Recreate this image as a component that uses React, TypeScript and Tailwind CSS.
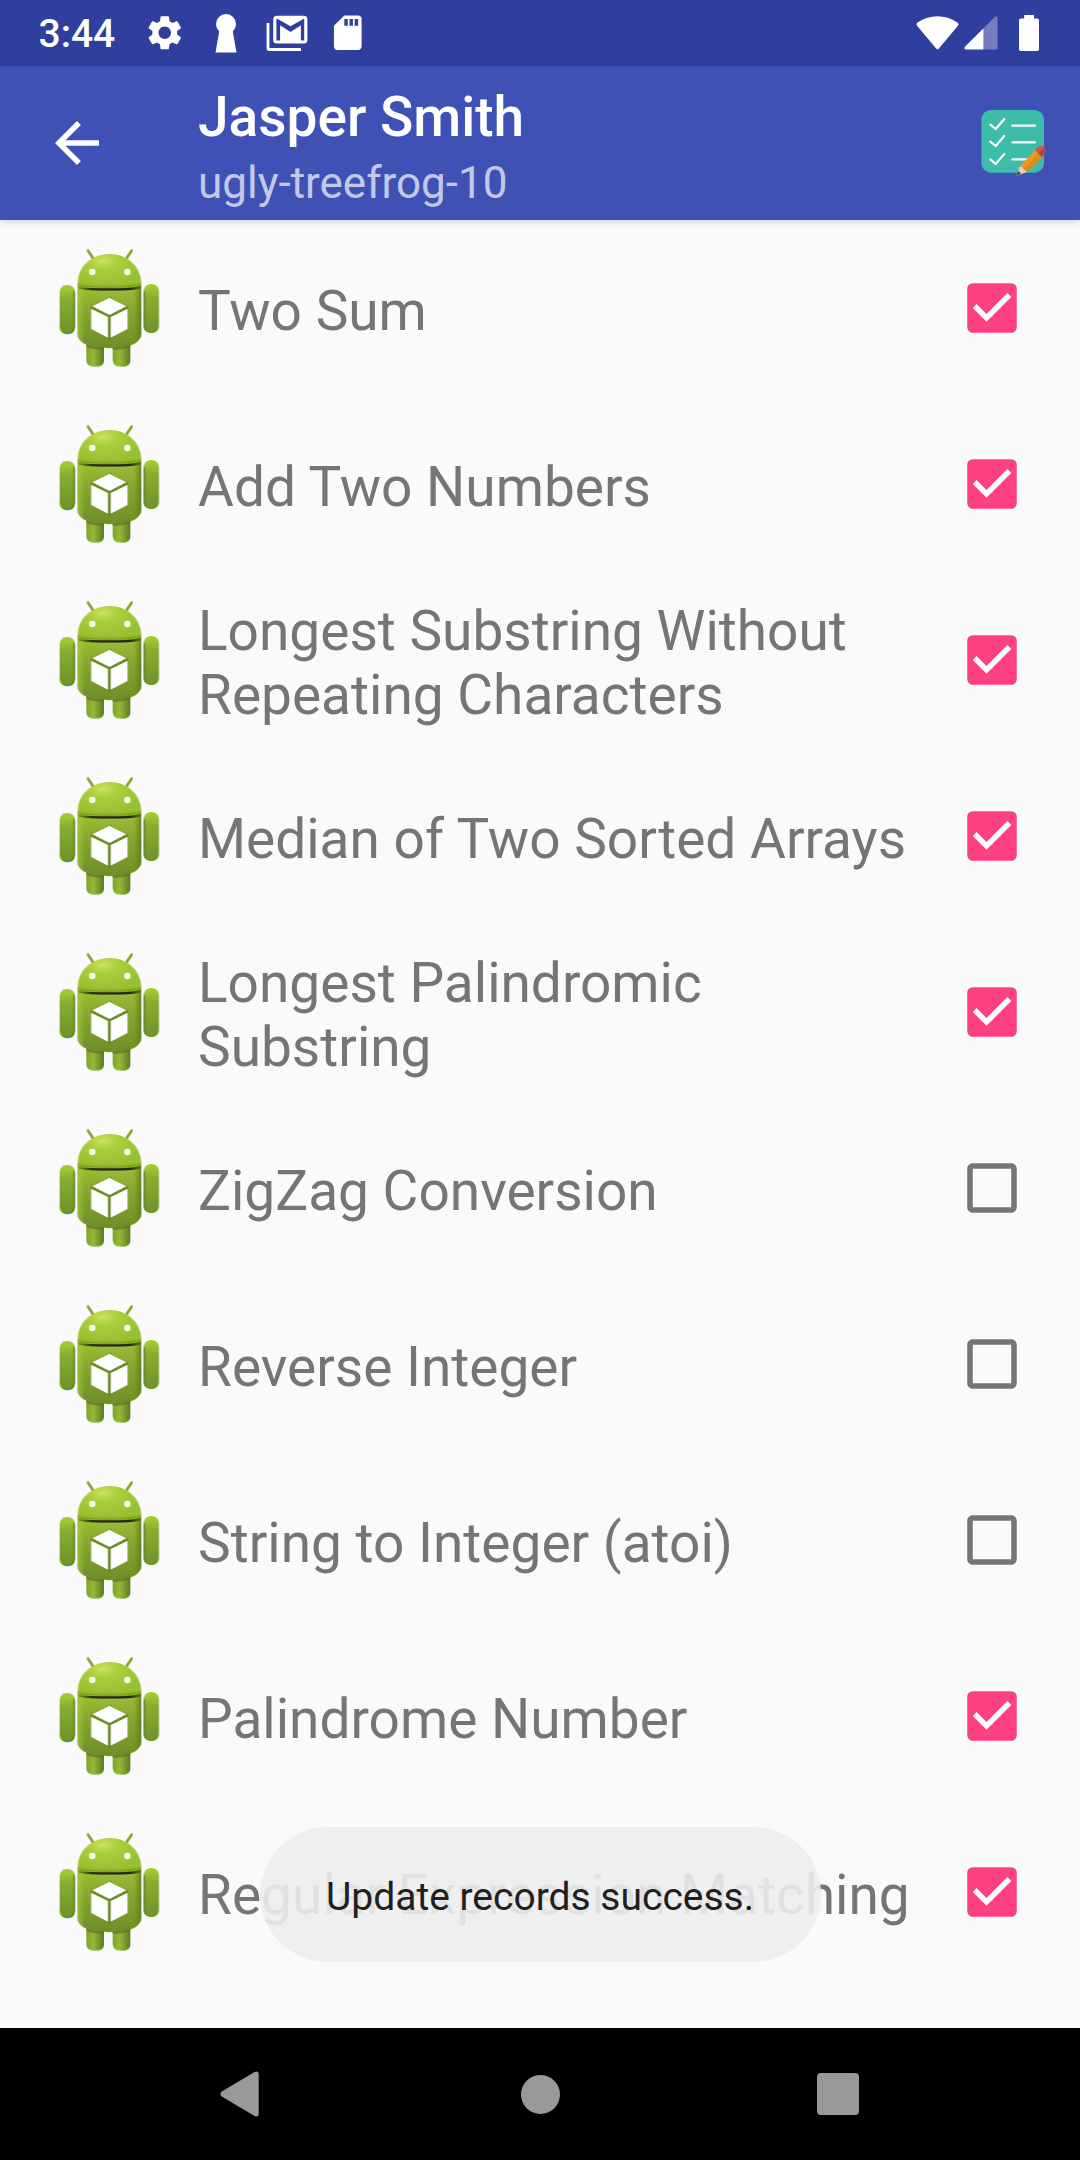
import React from "react";
import {
  MdArrowBack,
  MdCheckBox,
  MdCheckBoxOutlineBlank,
  MdSdCard,
  MdSettings,
} from "react-icons/md";

const problems = [
  { title: "Two Sum", done: true },
  { title: "Add Two Numbers", done: true },
  { title: "Longest Substring Without Repeating Characters", done: true },
  { title: "Median of Two Sorted Arrays", done: true },
  { title: "Longest Palindromic Substring", done: true },
  { title: "ZigZag Conversion", done: false },
  { title: "Reverse Integer", done: false },
  { title: "String to Integer (atoi)", done: false },
  { title: "Palindrome Number", done: true },
  { title: "Regular Expression Matching", done: true },
];

function Gradients() {
  return (
    <svg className="absolute h-0 w-0" aria-hidden="true">
      <defs>
        <linearGradient id="limb" x1="0" x2="1" y1="0" y2="0">
          <stop offset="0" stopColor="#7fa52b" />
          <stop offset="0.4" stopColor="#92b83a" />
          <stop offset="1" stopColor="#5d7c1f" />
        </linearGradient>
        <linearGradient id="arm" x1="0" x2="0" y1="0" y2="1">
          <stop offset="0" stopColor="#a8d035" />
          <stop offset="0.3" stopColor="#87ac31" />
          <stop offset="1" stopColor="#70932b" />
        </linearGradient>
        <radialGradient id="head" cx="0.4" cy="0.2" r="0.85">
          <stop offset="0" stopColor="#cfe55f" />
          <stop offset="0.3" stopColor="#a9cf3a" />
          <stop offset="1" stopColor="#92bb2e" />
        </radialGradient>
        <linearGradient id="torso" x1="0" x2="0" y1="0" y2="1">
          <stop offset="0" stopColor="#98bd31" />
          <stop offset="0.5" stopColor="#7fa22b" />
          <stop offset="1" stopColor="#6e8f2b" />
        </linearGradient>
        <linearGradient id="torsoEdge" x1="0" x2="1" y1="0" y2="0">
          <stop offset="0" stopColor="#a9d040" stopOpacity="0.6" />
          <stop offset="0.12" stopColor="#a9d040" stopOpacity="0" />
          <stop offset="0.88" stopColor="#5f7f1c" stopOpacity="0" />
          <stop offset="1" stopColor="#56731a" stopOpacity="0.7" />
        </linearGradient>
        <linearGradient id="neck" x1="0" x2="1" y1="0" y2="0">
          <stop offset="0" stopColor="#7a9c2a" />
          <stop offset="0.25" stopColor="#1f2c07" />
          <stop offset="0.8" stopColor="#1f2c07" />
          <stop offset="1" stopColor="#56731a" />
        </linearGradient>
        <filter id="soften" x="-10%" y="-10%" width="120%" height="120%">
          <feGaussianBlur stdDeviation="1.5" />
        </filter>
      </defs>
    </svg>
  );
}

function Robot() {
  return (
    <svg viewBox="0 -6 420 480" className="ml-10 h-[160px] w-[140px] shrink-0">
      <g filter="url(#soften)">
        <path d="M144 62l15 22M275 62l-15 22" stroke="#88a940" strokeWidth="9" strokeLinecap="round" />
        <path d="M139 335h53v57q0 18-26 18t-27-18z" fill="url(#limb)" />
        <path d="M218 335h53v57q0 18-26 18t-27-18z" fill="url(#limb)" />
        <path d="M139 345h53v14q-27 2-53-8zM218 345h53v6q-26 10-53 8z" fill="#587116" opacity="0.7" />
        <rect x="59" y="165" width="46" height="148" rx="21" fill="url(#arm)" />
        <path d="M100 180v112q-2 14-18 18 23 1 23-20V186z" fill="#5c7520" opacity="0.7" />
        <rect x="311" y="162" width="46" height="147" rx="21" fill="url(#arm)" />
        <path d="M316 180v110q0 12 16 17-21 0-21-20V186z" fill="#57721c" opacity="0.7" />
        <path d="M113 168q95 10 191-2l-1 16H114z" fill="url(#neck)" />
        <path d="M112 176q40 7 96 7t96-7v134q0 24-29 35-67 20-134 0-29-11-29-35z" fill="url(#torso)" />
        <path d="M112 176q40 7 96 7t96-7v134q0 24-29 35-67 20-134 0-29-11-29-35z" fill="url(#torsoEdge)" />
        <path d="M113 170q-3-48 31-76 29-22 64-22 38 0 64 22 34 28 32 73-30 8-96 8-62 0-95-5z" fill="url(#head)" />
        <path d="M114 163q90 11 190-2v5q-30 8-96 8-62 0-94-5z" fill="#6d9219" opacity="0.5" />
        <circle cx="157" cy="126" r="9.500" fill="#fff" />
        <circle cx="262" cy="126" r="9.500" fill="#fff" />
        <path d="M151 231l57-30 57 30v66l-57 31-57-31z" fill="#55701c" opacity="0.55" />
        <path d="M157 229l51-26 51 26-51 26z" fill="#fff" />
        <path d="M153 236l51 25v62l-51-26z" fill="#fff" />
        <path d="M263 236l-51 25v62l51-26z" fill="#fff" />
      </g>
    </svg>
  );
}

function Keyhole() {
  return (
    <svg viewBox="0 0 22 40" className="h-10 w-[22px]" fill="#fff">
      <circle cx="11" cy="11" r="10" />
      <path d="M4.500 17h13l4 22.500H.5z" />
    </svg>
  );
}

function MailStack() {
  return (
    <svg viewBox="0 0 42 36" className="h-9 w-[42px]" fill="none">
      <path d="M2 8v25.300q0 1.200 1.200 1.200H35" stroke="#fff" strokeWidth="2.800" />
      <rect x="8.800" y="2.400" width="31" height="24.600" rx="2" stroke="#fff" strokeWidth="3.200" />
      <path d="M14 26.500V10.300l10.500 6.600L35 10.300v16.200z" fill="#fff" />
      <path d="M12.700 25V5.500l11.800 7.800 11.800-7.800V25" stroke="#303f9f" strokeWidth="2.800" />
      <path d="M9 2.400h31L24.500 11.300z" fill="#fff" />
    </svg>
  );
}

function Wifi() {
  return (
    <svg viewBox="0 0 43 34" className="h-[34px] w-[43px]" fill="#fff">
      <path d="M1.100 9.800Q-.4 8 1.600 6.600 11 .3 21.500.3T41.400 6.600Q43.400 8 41.900 9.800L22.900 32.600Q21.500 34.200 20.100 32.600z" />
    </svg>
  );
}

function Signal() {
  return (
    <svg viewBox="0 0 34 34" className="ml-[5px] h-[34px] w-[34px]" fill="#fff">
      <path d="M30.800 1Q33.500-.8 33.500 2v30q0 1.500-1.500 1.500H19.500V12.200z" opacity="0.32" />
      <path d="M19.500 12.200v21.300H2Q-.7 33.500 1.200 30.500z" />
    </svg>
  );
}

function Battery() {
  return (
    <svg viewBox="0 0 20 36" className="ml-[21px] h-9 w-5" fill="#fff">
      <path d="M5.200 0h9.800v3.400h3.200q1.800 0 1.800 1.800v29q0 1.800-1.800 1.800H1.800Q0 36 0 34.200v-29q0-1.800 1.800-1.800h3.400z" />
    </svg>
  );
}

function Checklist() {
  return (
    <svg viewBox="288 315 228 228" className="mr-7 h-[76px] w-[76px] shrink-0" fill="none">
      <rect x="304" y="330" width="188" height="188" rx="29" fill="#3dbca9" />
      <g stroke="#fff" strokeWidth="6.500" strokeLinecap="round" strokeLinejoin="round">
        <path d="M331 374l16 13 26-30M331 425l16 13 26-30M331 478l16 14 26-30" />
        <path d="M397 377h68M397 427h68M397 478h45" />
      </g>
      <path d="M421 496l20 19-21 9-10 4q-2-2 1-8z" fill="#dfd0b8" />
      <path d="M415 512l9 9-12 6q-5 1-2-5z" fill="#50504c" />
      <path d="M421 497l44-46 21 20-45 45z" fill="#f0981f" />
      <path d="M432 506l45-46 10 11-46 45z" fill="#dc8a25" />
      <path d="M465 451l12-12q6-5 12 1l6 6q5 5 1 12l-10 13z" fill="#d4574c" />
      <path d="M475 461l15-17 5 3q5 5 1 11l-10 13z" fill="#a84a45" />
    </svg>
  );
}

export default function App() {
  return (
    <div className="relative flex h-[2160px] w-[1080px] flex-col overflow-hidden bg-[#fafafa] font-['Roboto',sans-serif]">
      <Gradients />
      <div className="flex h-[66px] shrink-0 items-center bg-[#303f9f] text-white">
        <span className="w-[134px] shrink-0 pt-0.5 pl-[38.500px] text-[39px] leading-[66px] font-medium">3:44</span>
        <div className="flex">
          <span className="flex w-[61px] items-center justify-center"><MdSettings className="h-[41.500px] w-[41.500px]" /></span>
          <span className="flex w-[61px] items-center justify-center"><Keyhole /></span>
          <span className="flex w-[61px] items-center justify-center"><MailStack /></span>
          <span className="flex w-[61px] items-center justify-center"><MdSdCard className="h-[41.500px] w-[41.500px]" /></span>
        </div>
        <div className="mr-[41px] ml-auto flex items-center">
          <Wifi />
          <Signal />
          <Battery />
        </div>
      </div>

      <header className="z-10 flex h-[154px] shrink-0 items-center bg-[#3f51b5] text-white shadow-[0_2px_9px_rgba(0,0,0,0.15)]">
        <MdArrowBack className="mr-[88px] ml-11 h-[66px] w-[66px] shrink-0" />
        <div className="flex-1 pt-3.5">
          <h1 className="text-[55px] leading-[64px] font-medium">Jasper Smith</h1>
          <p className="mt-0.5 text-[44px] leading-[64px] text-white/70">ugly-treefrog-10</p>
        </div>
        <Checklist />
      </header>

      <main className="flex-1">
        {problems.map((p) => (
          <div key={p.title} className="flex h-44 items-center">
            <Robot />
            <p className="ml-[18px] w-[728px] shrink-0 pt-1.5 text-[55px] leading-[64px] text-[#757575]">{p.title}</p>
            {p.done ? (
              <MdCheckBox className="ml-[33px] h-[66px] w-[66px] text-[#ff4081]" />
            ) : (
              <MdCheckBoxOutlineBlank className="ml-[33px] h-[66px] w-[66px] text-[#757575]" />
            )}
          </div>
        ))}
      </main>

      <div className="absolute bottom-[198px] left-[259.500px] flex h-[135px] w-[561px] items-center justify-center rounded-full bg-[#ededed]/90">
        <span className="pt-[5px] text-[39px] leading-[45px] whitespace-nowrap text-[#202020]">Update records success.</span>
      </div>

      <nav className="flex h-[132px] shrink-0 items-center bg-black text-[#999]">
        <svg viewBox="0 0 39 46" className="ml-[220px] h-[46px] w-[39px]" fill="currentColor">
          <path d="M1.800 20.500L34.500 1Q38.700-.8 38.700 3v40q0 3.800-4.200 2L1.800 25.500q-2.800-2.500 0-5z" />
        </svg>
        <div className="ml-[262px] h-[39px] w-[39px] rounded-full bg-[#999]" />
        <div className="ml-[257px] h-[41.500px] w-[41.500px] rounded bg-[#999]" />
      </nav>
    </div>
  );
}
